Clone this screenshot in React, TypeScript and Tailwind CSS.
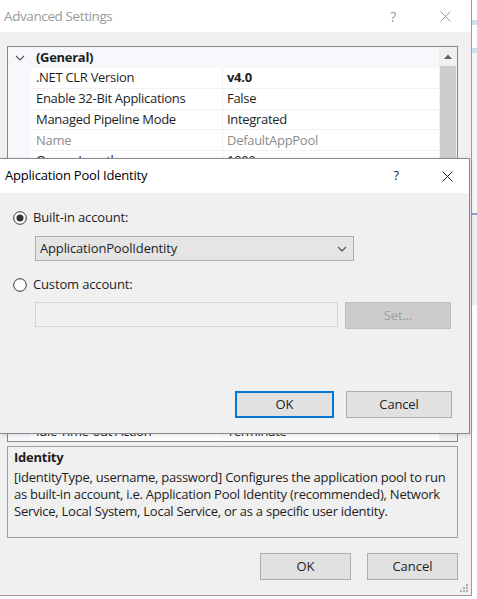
import React from 'react';

const FONT = "font-['Segoe_UI','Open_Sans',sans-serif]";

type Row = { name: string; value: string; header?: boolean; bold?: boolean; muted?: boolean };

const rows: Row[] = [
  { name: '(General)', value: '', header: true },
  { name: '.NET CLR Version', value: 'v4.0', bold: true },
  { name: 'Enable 32-Bit Applications', value: 'False' },
  { name: 'Managed Pipeline Mode', value: 'Integrated' },
  { name: 'Name', value: 'DefaultAppPool', muted: true },
  { name: 'Queue Length', value: '1000' },
  { name: 'Start Mode', value: 'OnDemand' },
  { name: '(CPU)', value: '', header: true },
  { name: 'Limit (percent)', value: '0' },
  { name: 'Limit Action', value: 'NoAction' },
  { name: 'Limit Interval (minutes)', value: '5' },
  { name: 'Processor Affinity Enabled', value: 'False' },
  { name: 'Processor Affinity Mask', value: '4294967295' },
  { name: 'Processor Affinity Mask (64-bit option)', value: '4294967295' },
  { name: '(Process Model)', value: '', header: true },
  { name: 'Generate Process Model Event Log Entry', value: '' },
  { name: 'Identity', value: 'ApplicationPoolIdentity' },
  { name: 'Idle Time-out (minutes)', value: '20' },
  { name: 'Idle Time-out Action', value: 'Terminate' },
  { name: 'Load User Profile', value: 'True' },
];

const Chevron = ({ className = '' }: { className?: string }) => (
  <svg width="10" height="6" viewBox="0 0 10 6" className={className}>
    <path d="M1 1 L5 5 L9 1" fill="none" stroke="currentColor" strokeWidth="1.2" />
  </svg>
);

const CloseX = ({ className = '' }: { className?: string }) => (
  <svg width="11" height="11" viewBox="0 0 11 11" className={className}>
    <path d="M0.5 0.5 L10.5 10.5 M10.5 0.5 L0.5 10.5" stroke="currentColor" strokeWidth="1" />
  </svg>
);

const Radio = ({ checked }: { checked?: boolean }) => (
  <svg width="14" height="14" viewBox="0 0 14 14">
    <circle cx="7" cy="7" r="6.3" fill="#fff" stroke="#333" strokeWidth="1" />
    {checked && <circle cx="7" cy="7" r="3.5" fill="#333" />}
  </svg>
);

function PropertyGrid() {
  return (
    <div className="h-[396px] border border-[#828790] bg-white flex overflow-hidden tracking-[-0.3px]">
      <div className="flex-1 flex flex-col overflow-hidden">
        {rows.map((r, i) =>
          r.header ? (
            <div key={i} className={`flex items-center bg-[#f6f8fb] shrink-0 ${i === 0 ? 'h-[21px]' : 'h-[20.8px]'}`}>
              <div className="w-[23px] flex justify-center text-[#555]">
                <Chevron />
              </div>
              <span className="pl-[5px] font-bold text-[#1e1e1e]">{r.name}</span>
            </div>
          ) : (
            <div key={i} className="flex h-[20.8px] shrink-0">
              <div className="w-[23px] bg-[#f6f8fb]" />
              <div
                className={`w-[192px] pl-[5px] flex items-center border-b border-r border-[#f0f0f0] whitespace-nowrap overflow-hidden ${
                  r.muted ? 'text-[#8d8d8d]' : 'text-[#1e1e1e]'
                }`}
              >
                {r.name}
              </div>
              <div
                className={`flex-1 pl-[4px] flex items-center border-b border-[#f0f0f0] whitespace-nowrap ${
                  r.muted ? 'text-[#8d8d8d]' : 'text-[#1e1e1e]'
                } ${r.bold ? 'font-bold' : ''}`}
              >
                {r.value}
              </div>
            </div>
          )
        )}
      </div>
      <div className="w-[18px] bg-[#f0f0f0] flex flex-col items-center">
        <div className="h-[19px] flex items-center justify-center">
          <svg width="8" height="5" viewBox="0 0 8 5">
            <path d="M0 5 L4 0.5 L8 5 Z" fill="#606060" />
          </svg>
        </div>
        <div className="w-[16px] h-[300px] bg-[#cdcdcd]" />
        <div className="flex-1" />
        <div className="h-[17px] flex items-center justify-center">
          <svg width="8" height="5" viewBox="0 0 8 5">
            <path d="M0 0 L4 4.5 L8 0 Z" fill="#606060" />
          </svg>
        </div>
      </div>
    </div>
  );
}

function AppPoolDialog() {
  return (
    <div className="absolute left-0 top-[158px] w-[470px] h-[276px] border-t border-r border-b border-[#8a8a8a] bg-[#f0f0f0] flex flex-col shadow-[1px_1px_4px_rgba(0,0,0,0.12)]">
      <div className="h-[34px] bg-white flex items-center pl-[5px] text-[13px] tracking-[-0.2px] text-black shrink-0">
        <span>Application Pool Identity</span>
        <span className="ml-auto mr-[43px] text-[13px] text-[#222]">?</span>
        <CloseX className="mr-[16px] text-[#222]" />
      </div>
      <div className="flex flex-col pl-[13px] pr-[17px] text-[13px] tracking-[-0.15px] text-[#1e1e1e]">
        <div className="mt-[15px] h-[20px] flex items-center gap-[6px]">
          <Radio checked />
          <span>Built-in account:</span>
        </div>
        <div className="mt-[8px] ml-[22px] w-[319px] h-[25px] bg-[#e5e5e5] border border-[#adadad] flex items-center pl-[4px] pr-[6px]">
          <span>ApplicationPoolIdentity</span>
          <Chevron className="ml-auto text-[#555]" />
        </div>
        <div className="mt-[14px] h-[20px] flex items-center gap-[6px]">
          <Radio />
          <span>Custom account:</span>
        </div>
        <div className="mt-[7px] ml-[22px] flex gap-[7px] items-start">
          <div className="w-[303px] h-[25px] border border-[#d4d4d4] bg-[#f0f0f0]" />
          <div className="w-[106px] h-[27px] bg-[#cccccc] border border-[#bfbfbf] flex items-center justify-center text-[#a0a0a0]">
            Set...
          </div>
        </div>
        <div className="mt-[62px] flex justify-end gap-[12px]">
          <div className="w-[99px] h-[27px] bg-[#e1e1e1] border-2 border-[#0078d7] flex items-center justify-center">
            OK
          </div>
          <div className="w-[106px] h-[27px] bg-[#e1e1e1] border border-[#adadad] flex items-center justify-center">
            Cancel
          </div>
        </div>
      </div>
    </div>
  );
}

export default function App() {
  return (
    <div className={`relative w-[477px] h-[599px] bg-white overflow-hidden flex ${FONT}`}>
      <div className="w-[472px] h-[596px] border-r border-b border-[#9a9a9a] flex flex-col shrink-0">
        <div className="h-[32px] bg-white flex items-center pl-[4px] text-[13.5px] tracking-[-0.4px] text-[#9a9a9a] shrink-0">
          <span>Advanced Settings</span>
          <span className="ml-auto mr-[44px] text-[14px]">?</span>
          <CloseX className="mr-[20px] text-[#9a9a9a]" />
        </div>
        <div className="flex-1 bg-[#f0f0f0] pt-[14px] pl-[7px] pr-[13px] text-[13px] text-[#1e1e1e] flex flex-col relative">
          <PropertyGrid />
          <div className="mt-[4px] h-[92px] border border-[#a0a0a0] px-[6px] pt-[2px] leading-[17px] tracking-[-0.25px]">
            <div className="font-bold">Identity</div>
            <div className="mt-[3px]">
              [identityType, username, password] Configures the application pool to run as built-in account, i.e.
              Application Pool Identity (recommended), Network Service, Local System, Local Service, or as a specific
              user identity.
            </div>
          </div>
          <div className="mt-[15px] flex justify-end gap-[16px]">
            <div className="w-[91px] h-[27px] bg-[#e1e1e1] border border-[#adadad] flex items-center justify-center">OK</div>
            <div className="w-[91px] h-[27px] bg-[#e1e1e1] border border-[#adadad] flex items-center justify-center">
              Cancel
            </div>
          </div>
          <svg width="9" height="9" viewBox="0 0 9 9" className="absolute right-[3px] bottom-[3px]">
            <g fill="#b0b0b0">
              <rect x="7" y="1" width="2" height="2" />
              <rect x="4" y="4" width="2" height="2" />
              <rect x="7" y="4" width="2" height="2" />
              <rect x="1" y="7" width="2" height="2" />
              <rect x="4" y="7" width="2" height="2" />
              <rect x="7" y="7" width="2" height="2" />
            </g>
          </svg>
        </div>
      </div>
      <div className="flex-1 flex flex-col bg-white">
        <div className="h-[20px]" />
        <div className="h-[5px] bg-[#cfe0f0]" />
        <div className="h-[23px]" />
        <div className="h-[5px] bg-[#cfe0f0]" />
        <div className="h-[160px] bg-[#f6f6f6]" />
        <div className="h-[2px] bg-[#9aa0d0]" />
        <div className="h-[90px] bg-[#f0f0f0]" />
        <div className="flex-1" />
      </div>
      <AppPoolDialog />
    </div>
  );
}
